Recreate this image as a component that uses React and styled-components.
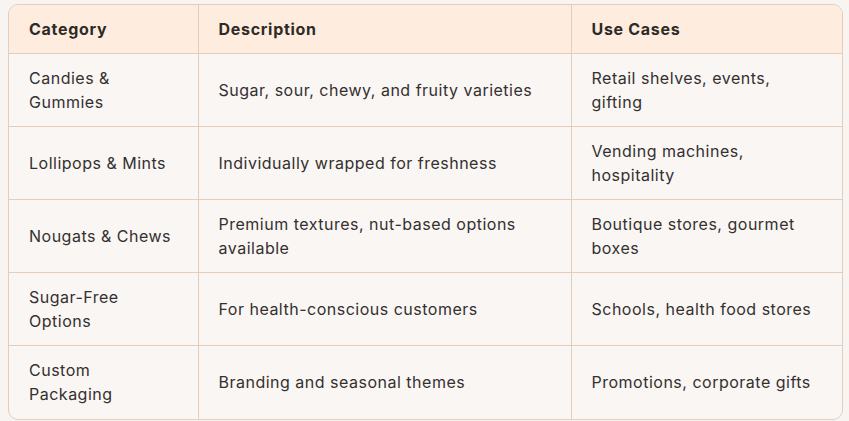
import React from 'react';
import styled, { createGlobalStyle } from 'styled-components';

const GlobalStyle = createGlobalStyle`
  body {
    margin: 0;
    background: #f8f4f1;
    font-family: Inter, "Open Sans", sans-serif;
  }
`;

const rows = [
  ['Candies & Gummies', 'Sugar, sour, chewy, and fruity varieties', 'Retail shelves, events, gifting'],
  ['Lollipops & Mints', 'Individually wrapped for freshness', 'Vending machines, hospitality'],
  ['Nougats & Chews', 'Premium textures, nut-based options available', 'Boutique stores, gourmet boxes'],
  ['Sugar-Free Options', 'For health-conscious customers', 'Schools, health food stores'],
  ['Custom\nPackaging', 'Branding and seasonal themes', 'Promotions, corporate gifts'],
];

export default function App() {
  return (
    <>
      <GlobalStyle />
      <Page>
        <Frame>
          <Table>
            <colgroup>
              <col style={{ width: 189 }} />
              <col style={{ width: 373 }} />
              <col />
            </colgroup>
            <thead>
              <tr>
                <Head>Category</Head>
                <Head>Description</Head>
                <Head>Use Cases</Head>
              </tr>
            </thead>
            <tbody>
              {rows.map((r) => (
                <Row key={r[0]}>
                  {r.map((c) => (
                    <Cell key={c}>{c}</Cell>
                  ))}
                </Row>
              ))}
            </tbody>
          </Table>
        </Frame>
      </Page>
    </>
  );
}

const Page = styled.div`
  padding: 4px 6px 3px 8px;
`;

const Frame = styled.div`
  border: 1px solid #e6cdb9;
  border-radius: 10px;
  overflow: hidden;
  background: #faf6f3;
`;

const Table = styled.table`
  width: 100%;
  border-collapse: collapse;
  table-layout: fixed;
`;

const Head = styled.th`
  background: #feeddf;
  color: #2e2a27;
  font-size: 16px;
  font-weight: 700;
  letter-spacing: 0.7px;
  line-height: 24px;
  text-align: left;
  padding: 12px 18px 12px 20px;
  border-bottom: 1px solid #e6cdb9;
  & + & {
    border-left: 1px solid #e6cdb9;
  }
`;

const Row = styled.tr`
  & + & td {
    border-top: 1px solid #e6cdb9;
  }
`;

const Cell = styled.td`
  color: #333030;
  font-size: 16px;
  letter-spacing: 0.5px;
  line-height: 24px;
  height: 73px;
  box-sizing: border-box;
  padding: 12px 18px 12px 20px;
  vertical-align: middle;
  white-space: pre-line;
  & + & {
    border-left: 1px solid #e6cdb9;
  }
`;
